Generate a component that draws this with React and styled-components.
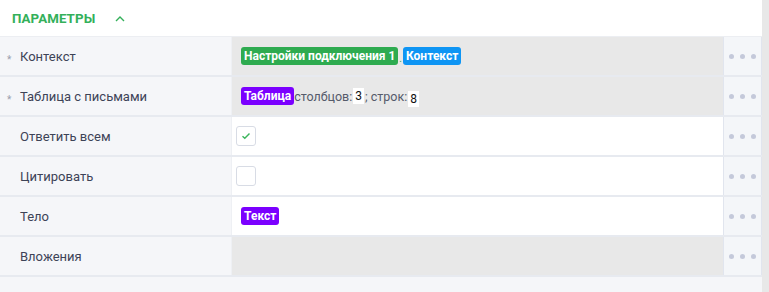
import React from 'react';
import styled, { createGlobalStyle } from 'styled-components';

const GlobalStyle = createGlobalStyle`
  body {
    margin: 0;
    background: #ffffff;
    font-family: Roboto, "Liberation Sans", sans-serif;
  }
`;

const Page = styled.div`
  display: flex;
  width: 769px;
  height: 292px;
  overflow: hidden;
`;

const Panel = styled.div`
  flex: 1;
  display: flex;
  flex-direction: column;
  background: #f5f6f9;
`;

const ScrollTrack = styled.div`
  width: 7px;
  background: #e8e8e8;
`;

const Header = styled.div`
  display: flex;
  align-items: center;
  gap: 20px;
  height: 36px;
  padding-left: 12px;
  background: #ffffff;
  border-bottom: 1px solid #eceef2;
`;

const Title = styled.span`
  color: #34b05a;
  font-size: 13.3px;
  font-weight: 700;
  letter-spacing: 0.1px;
`;

const Row = styled.div`
  display: grid;
  grid-template-columns: 232px 1fr 39px;
  height: 38px;
  border-bottom: 2px solid #e7eaf0;
`;

const Label = styled.div`
  display: flex;
  align-items: center;
  position: relative;
  padding-left: 20px;
  font-size: 13px;
  color: #3d4357;
  border-right: 1px solid #eef0f4;
`;

const Required = styled.span`
  position: absolute;
  left: 7px;
  top: 18px;
  font-size: 10px;
  line-height: 10px;
  color: #9aa0ad;
`;

const Value = styled.div`
  display: flex;
  align-items: center;
  padding-left: ${p => (p.$box ? '4px' : '9px')};
  background: ${p => (p.$muted ? '#e8e8e8' : '#ffffff')};
  font-size: 12.5px;
  color: #555b6b;
`;

const Token = styled.span`
  display: inline-flex;
  align-items: center;
  height: 18px;
  padding: 0 3px;
  border-radius: 3px;
  background: ${p => p.$color};
  color: #ffffff;
  font-size: 12px;
  font-weight: 700;
`;

const Sep = styled.span`
  color: #2ea84f;
  font-size: 10px;
  padding: 5px 1px 0;
`;

const Num = styled.span`
  display: inline-block;
  background: #ffffff;
  color: #111111;
  font-size: 12px;
  line-height: 16px;
  padding: 0 2px;
  margin: 0 1px;
  transform: translateY(${p => p.$shift || 0}px);
`;

const Check = styled.div`
  display: flex;
  align-items: center;
  justify-content: center;
  width: 18px;
  height: 18px;
  border: 1px solid #d8dce5;
  border-radius: 3px;
  background: #ffffff;
`;

const Actions = styled.div`
  display: flex;
  align-items: center;
  justify-content: center;
  gap: 6px;
  background: #f4f6f9;
  border-left: 1px solid #e1e5ee;
  border-right: 1px solid #e1e5ee;
`;

const Dot = styled.span`
  width: 5px;
  height: 5px;
  border-radius: 50%;
  background: #c4c9da;
`;

const Dots = () => (
  <Actions>
    <Dot />
    <Dot />
    <Dot />
  </Actions>
);

const rows = [
  {
    label: 'Контекст',
    required: true,
    muted: true,
    value: (
      <>
        <Token $color="#2eab50">Настройки подключения 1</Token>
        <Sep>.</Sep>
        <Token $color="#0e95f4">Контекст</Token>
      </>
    ),
  },
  {
    label: 'Таблица с письмами',
    required: true,
    muted: true,
    value: (
      <>
        <Token $color="#7b00ff">Таблица</Token>
        столбцов: <Num $shift={0}>3</Num>; строк: <Num $shift={3}>8</Num>
      </>
    ),
  },
  {
    label: 'Ответить всем',
    box: true,
    value: (
      <Check>
        <svg width="10" height="8" viewBox="0 0 10 8">
          <path d="M1.5 4.2 L3.8 6.3 L8.5 1.5" fill="none" stroke="#3bb55b" strokeWidth="1.4" />
        </svg>
      </Check>
    ),
  },
  { label: 'Цитировать', box: true, value: <Check /> },
  { label: 'Тело', value: <Token $color="#7b00ff">Текст</Token> },
  { label: 'Вложения', muted: true, value: null },
];

export default function App() {
  return (
    <>
      <GlobalStyle />
      <Page>
        <Panel>
          <Header>
            <Title>ПАРАМЕТРЫ</Title>
            <svg width="10" height="7" viewBox="0 0 10 7">
              <path d="M1 6 L5 2 L9 6" fill="none" stroke="#34b05a" strokeWidth="1.4" />
            </svg>
          </Header>
          {rows.map(r => (
            <Row key={r.label}>
              <Label>
                {r.required && <Required>*</Required>}
                {r.label}
              </Label>
              <Value $muted={r.muted} $box={r.box}>
                {r.value}
              </Value>
              <Dots />
            </Row>
          ))}
        </Panel>
        <ScrollTrack />
      </Page>
    </>
  );
}
